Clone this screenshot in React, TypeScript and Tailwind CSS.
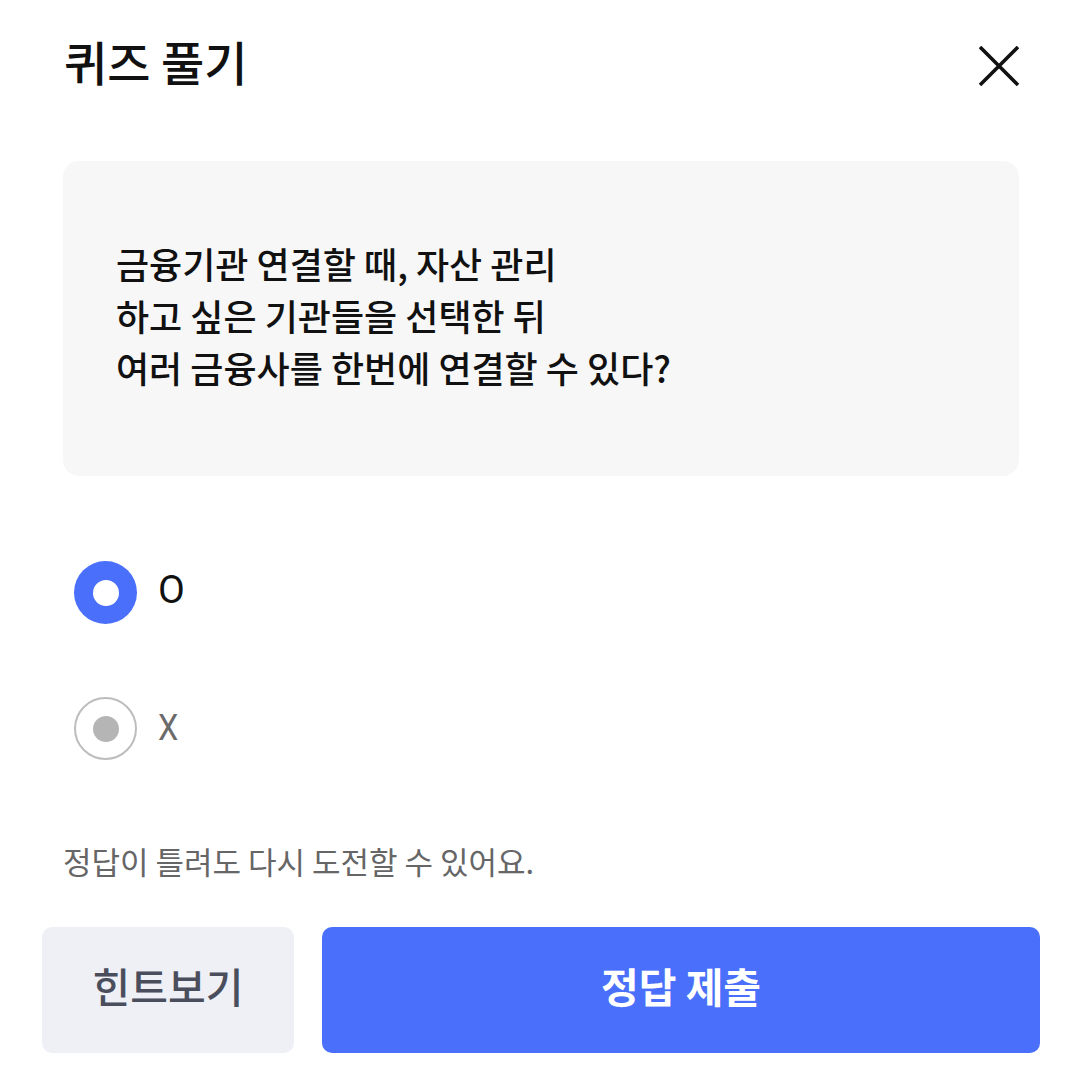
import React from "react";

const KR = { fontFamily: '"Noto Sans CJK KR", "Noto Sans", sans-serif' };
const RB = { fontFamily: 'Roboto, "Noto Sans CJK KR", sans-serif' };

export default function App() {
  return (
    <div className="w-[1080px] h-[1092px] bg-white flex flex-col" style={KR}>
      <div className="h-[128px] pl-[64px] pr-[61px] flex items-center justify-between">
        <h1 className="text-[47px] leading-none font-medium text-[#111111] -mt-[7px]">퀴즈 풀기</h1>
        <svg width="40" height="40" viewBox="0 0 40 40" className="mt-[4px]">
          <path d="M1 1 L39 39 M39 1 L1 39" stroke="#111111" strokeWidth="3.6" fill="none" />
        </svg>
      </div>

      <div className="mt-[33px] ml-[63px] mr-[61px] h-[315px] rounded-[16px] bg-[#f7f7f7] flex items-center pl-[53px] pb-[8px]">
        <p className="text-[36px] leading-[52px] font-medium text-[#111111]">
          금융기관 연결할 때, 자산 관리
          <br />
          하고 싶은 기관들을 선택한 뒤
          <br />
          여러 금융사를 한번에 연결할 수 있다?
        </p>
      </div>

      <div className="mt-[85px] ml-[74px] flex flex-col gap-[73px]">
        <div className="flex items-center gap-[21px]">
          <div className="w-[63px] h-[63px] rounded-full bg-[#4a6ffb] flex items-center justify-center">
            <div className="w-[26px] h-[26px] rounded-full bg-white" />
          </div>
          <span className="text-[39px] leading-none text-[#111111] -mt-[4px]" style={RB}>O</span>
        </div>
        <div className="flex items-center gap-[21px]">
          <div className="w-[63px] h-[63px] rounded-full border-[2px] border-[#bdbdbd] flex items-center justify-center">
            <div className="w-[26px] h-[26px] rounded-full bg-[#b5b5b5]" />
          </div>
          <span className="text-[36px] leading-none text-[#6b6b6b] -mt-[2px] scale-x-90 origin-left" style={RB}>X</span>
        </div>
      </div>

      <p className="mt-[81px] ml-[63px] text-[31px] leading-[40px] text-[#666666]">
        정답이 틀려도 다시 도전할 수 있어요.
      </p>

      <div className="mt-[46px] pl-[42px] pr-[40px] flex gap-[28px]">
        <button className="w-[252px] h-[126px] rounded-[10px] bg-[#eef0f5] text-[41px] font-medium text-[#4a4e5c] pb-[8px]">
          힌트보기
        </button>
        <button className="flex-1 h-[126px] rounded-[10px] bg-[#4a6ffb] text-[41px] font-bold text-white pb-[8px]">
          정답 제출
        </button>
      </div>
    </div>
  );
}
